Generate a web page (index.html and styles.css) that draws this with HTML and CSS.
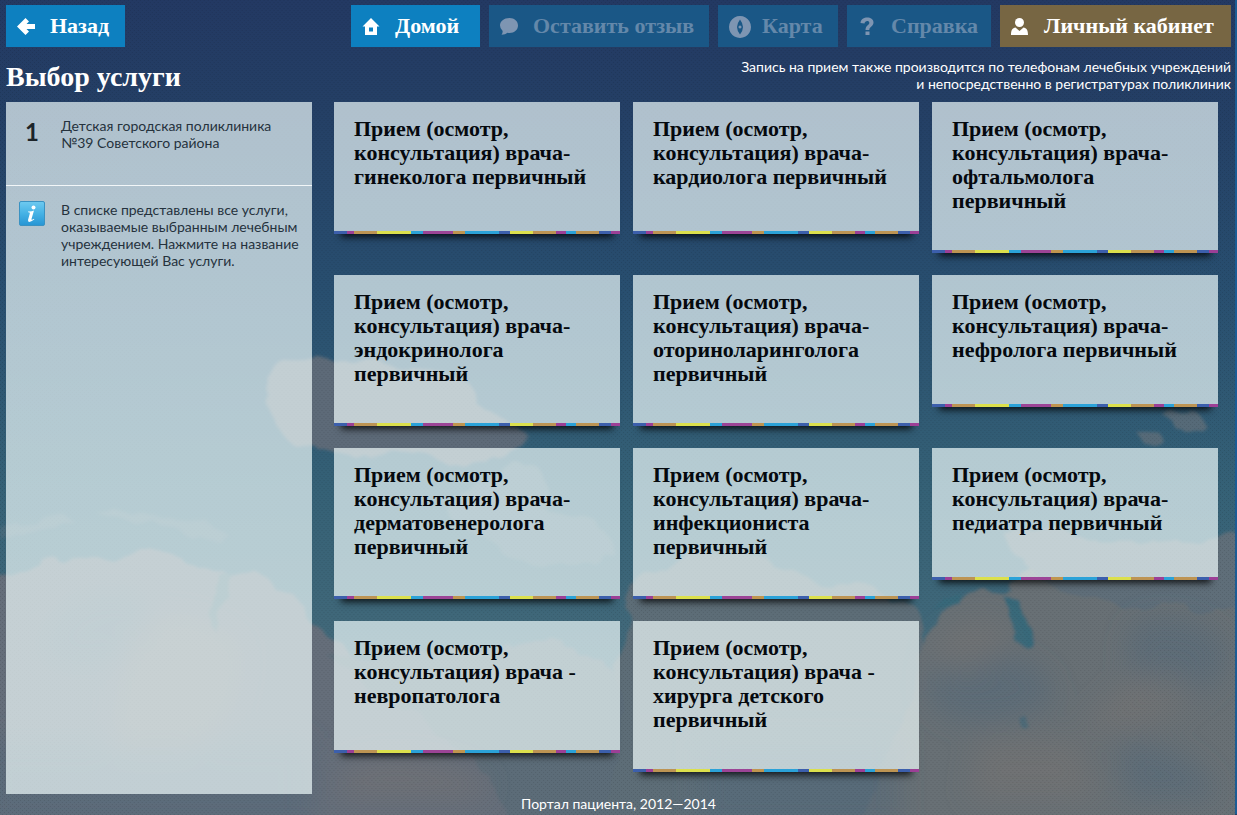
FILE: index.html
```
<!DOCTYPE html>
<html lang="ru">
<head>
<meta charset="utf-8">
<meta name="viewport" content="width=device-width, initial-scale=1">
<title>Выбор услуги</title>
<link rel="stylesheet" href="styles.css">
</head>
<body>
<svg class="sky" viewBox="0 0 1237 815" preserveAspectRatio="none" aria-hidden="true">
  <defs>
    <linearGradient id="air" x1="0" y1="0" x2="0" y2="1">
      <stop offset="0" stop-color="#233963"/>
      <stop offset=".13" stop-color="#243f65"/>
      <stop offset=".35" stop-color="#284e6f"/>
      <stop offset=".6" stop-color="#356176"/>
      <stop offset=".8" stop-color="#42697a"/>
      <stop offset="1" stop-color="#4d6973"/>
    </linearGradient>
    <filter id="soft" x="-5%" y="-5%" width="110%" height="110%">
      <feTurbulence type="fractalNoise" baseFrequency=".025" numOctaves="3" seed="4" result="noise"/>
      <feDisplacementMap in="SourceGraphic" in2="noise" scale="26" xChannelSelector="R" yChannelSelector="G"/>
      <feGaussianBlur stdDeviation="1.500"/>
    </filter>
    <filter id="haze" x="-20%" y="-20%" width="140%" height="140%"><feGaussianBlur stdDeviation="14"/></filter>
    <pattern id="weave" width="4" height="4" patternUnits="userSpaceOnUse">
      <path d="M0 0h1v1h-1zM2 2h1v1h-1z" fill="#000" opacity=".1"/>
    </pattern>
  </defs>
  <rect width="1237" height="815" fill="url(#air)"/>
  <g filter="url(#soft)">
    <path fill="#5d6a78" d="M268 375Q275 358 300 354Q322 352 335 366Q370 355 400 368Q430 372 445 372Q475 380 475 400Q515 412 522 435Q525 448 512 458Q490 455 460 460Q400 450 330 455Q285 445 268 410Z"/>
    <path fill="#4b6b7b" d="M500 470Q540 462 550 490Q550 515 590 520Q615 530 610 560Q560 570 520 560Q470 540 450 500Z"/>
    <path fill="#47697a" d="M0 528Q60 515 75 525L0 540ZM100 512Q130 505 160 516Q210 515 225 535Q220 550 200 540Q180 526 145 522Z"/>
    <path fill="#656e7a" d="M-20 573Q30 572 42 560Q70 553 98 563Q125 562 145 547Q168 543 180 554Q190 572 220 574Q238 580 255 575Q270 573 272 592Q300 594 308 612Q330 630 350 650Q380 690 450 720Q490 745 510 760Q530 785 610 790V840H-20Z"/>
    <path fill="#5c6c78" d="M330 660Q430 655 490 650Q550 625 580 650Q625 670 640 690L650 840H520Q480 740 420 720Z"/>
    <path fill="#5d6d77" d="M625 600Q650 560 690 560Q740 540 775 560Q800 590 850 585Q910 590 925 620L930 840H610Z"/>
    <path fill="#687075" d="M922 660Q930 615 965 600Q980 585 1000 592Q1010 595 1020 590Q1030 565 1065 565Q1080 550 1110 562Q1150 570 1180 565Q1215 575 1260 580V840H850Q900 745 922 660Z"/>
    <path fill="#5e6e79" d="M1010 530Q1060 525 1085 545Q1140 550 1200 540Q1215 530 1260 533V605H1110Q1040 580 1010 550Z"/>
    <path fill="#566b78" d="M1160 411Q1190 406 1210 428Q1180 436 1160 411ZM1135 430Q1160 425 1166 442Q1150 452 1135 430Z"/>
    <path fill="#37697a" d="M1006 595L1022 600L1025 625Q1042 640 1030 645Q1010 650 1014 630ZM935 610Q950 592 965 594L960 606Z"/>
    <path fill="#4c6a77" d="M222 578L235 575L225 600L218 630L208 625ZM1015 720Q1030 710 1028 728Q1018 735 1015 720Z"/>
  </g>
  <g filter="url(#haze)">
    <path fill="#52687a" opacity=".5" d="M60 610Q120 570 150 610Q170 640 120 660Q70 680 40 650ZM930 670Q1000 640 1040 670Q1080 700 1010 720Q950 730 930 700ZM1140 620Q1210 610 1230 650Q1220 710 1160 690Q1110 665 1140 620ZM1120 740Q1210 750 1220 800H1130ZM-20 740H310V830H-20ZM700 740H900V830H700Z"/>
    <path fill="#7b7673" opacity=".4" d="M930 650Q970 605 1010 630Q1010 660 960 680ZM1120 690Q1170 650 1200 690Q1160 740 1080 730ZM980 740H1080L1100 800H970ZM130 640Q160 590 240 640Q250 720 190 750H110ZM340 770Q400 740 490 780L480 800H340Z"/>
  </g>
  <rect width="1237" height="815" fill="url(#weave)"/>
</svg>

<header class="topbar">
  <button class="btn btn-back" type="button">
    <svg class="icon" viewBox="0 0 24 24" aria-hidden="true"><path d="M0 12.500L8.500 4L12 7.500L9.500 10H18v5H9.500L12 17.500L8.500 21z"/></svg>
    <span>Назад</span>
  </button>
  <nav class="menu">
    <button class="btn btn-home" type="button">
      <svg class="icon" viewBox="0 0 24 24" aria-hidden="true"><path fill-rule="evenodd" d="M9 4l8.500 8.500h-2.500V21H3v-8.500H.5zM7 13.500v4h4v-4z"/></svg>
      <span>Домой</span>
    </button>
    <button class="btn btn-review" type="button" disabled>
      <svg class="icon" viewBox="0 0 24 24" aria-hidden="true"><path d="M9.500 4c5 0 8.500 3.200 8.500 7.500s-3.500 7.500-8.500 7.500q-1 0-2-.2-2 2-6 2 1.500-2 1-4Q0 14.500 0 11.500c0-4.300 4-7.500 9.500-7.500z"/></svg>
      <span>Оставить отзыв</span>
    </button>
    <button class="btn btn-map" type="button" disabled>
      <svg class="icon" viewBox="0 0 24 24" aria-hidden="true"><path fill-rule="evenodd" d="M11 2a11 11 0 1 0 .01 0zM11 5.500q3 4 3 7.500t-3 7.500q-3-4-3-7.500t3-7.500zM11 11.500a1.500 1.500 0 1 0 .01 0z"/></svg>
      <span>Карта</span>
    </button>
    <button class="btn btn-help" type="button" disabled>
      <svg class="icon" viewBox="0 0 24 24" aria-hidden="true"><path d="M2.500 9C3 1.800 15.500 2 15.500 8.500c0 4-4.200 4-4.200 7.500H7.500c0-5 3.800-4.500 3.800-7.300 0-2.500-4.600-2.400-4.800.8zM7.500 17.500h4v3.500h-4z"/></svg>
      <span>Справка</span>
    </button>
    <button class="btn btn-account" type="button">
      <svg class="icon" viewBox="0 0 24 24" aria-hidden="true"><circle cx="8.500" cy="8.500" r="4.500"/><path d="M0 21c0-5 1.500-7 4.500-7.500l4 3.500 4-3.500c3 .5 4.500 2.500 4.500 7.500z"/></svg>
      <span>Личный кабинет</span>
    </button>
  </nav>
</header>

<div class="heading">
  <h1>Выбор услуги</h1>
  <p>Запись на прием также производится по телефонам лечебных учреждений<br>и непосредственно в регистратурах поликлиник</p>
</div>

<div class="content">
  <aside class="sidebar">
    <section class="step">
      <span class="step-number">1</span>
      <p>Детская городская поликлиника №39 Советского района</p>
    </section>
    <section class="hint">
      <svg class="info" viewBox="0 0 26 26" aria-hidden="true">
        <defs><linearGradient id="info-fill" x1="0" y1="0" x2="0" y2="1"><stop offset="0" stop-color="#6fcaf0"/><stop offset=".5" stop-color="#45b2e5"/><stop offset="1" stop-color="#2795d4"/></linearGradient></defs>
        <rect x=".5" y=".5" width="25" height="24" rx="1.500" fill="url(#info-fill)" stroke="#3a92c2"/>
        <circle cx="14.500" cy="6.500" r="2" fill="#fff"/>
        <path fill="#fff" d="M9 10.500q3.500.2 6-1l-2.500 8.500q-.4 1.600 2.500-.2l.3.800q-6.500 4.500-6.300.4l1.800-6.500q.4-1.500-1.800-1.200z"/>
      </svg>
      <p>В списке представлены все услуги, оказываемые выбранным лечебным учреждением. Нажмите на название интересующей Вас услуги.</p>
    </section>
  </aside>
  <main class="tiles">
    <a class="tile" href="#">Прием (осмотр, консультация) врача-гинеколога первичный</a>
    <a class="tile" href="#">Прием (осмотр, консультация) врача-кардиолога первичный</a>
    <a class="tile" href="#">Прием (осмотр, консультация) врача-офтальмолога первичный</a>
    <a class="tile" href="#">Прием (осмотр, консультация) врача-эндокринолога первичный</a>
    <a class="tile" href="#">Прием (осмотр, консультация) врача-оториноларинголога первичный</a>
    <a class="tile" href="#">Прием (осмотр, консультация) врача-нефролога первичный</a>
    <a class="tile" href="#">Прием (осмотр, консультация) врача-дерматовенеролога первичный</a>
    <a class="tile" href="#">Прием (осмотр, консультация) врача-инфекциониста первичный</a>
    <a class="tile" href="#">Прием (осмотр, консультация) врача-педиатра первичный</a>
    <a class="tile" href="#">Прием (осмотр, консультация) врача - невропатолога</a>
    <a class="tile" href="#">Прием (осмотр, консультация) врача - хирурга детского первичный</a>
  </main>
</div>

<footer class="footer">Портал пациента, 2012—2014</footer>
</body>
</html>
```
FILE: styles.css
```
* {
  box-sizing: border-box;
}

body {
  margin: 0;
  padding: 5px 4px 0 6px;
  border-right: 2px solid #1c5c94;
  background: #243f65;
  color: #fff;
  font: 14px/17px Lato, "Noto Sans", sans-serif;
}

h1,
p {
  margin: 0;
}

.sky {
  position: absolute;
  inset: 0 2px 0 0;
  z-index: -1;
  width: calc(100% - 2px);
  height: 100%;
}

.topbar,
.menu,
.heading,
.content {
  display: flex;
}

.topbar,
.heading {
  justify-content: space-between;
}

.menu {
  gap: 9px;
}

.btn {
  display: flex;
  align-items: center;
  gap: 9px;
  height: 42px;
  padding: 0 0 0 11px;
  border: 0;
  background: #0d80c0;
  color: #fff;
  font: bold 22px/24px "Liberation Serif", serif;
  white-space: nowrap;
}

.btn:disabled {
  background: #1a5786;
  color: #6488aa;
}

.btn-back { width: 119px; }
.btn-home { width: 129px; }
.btn-review { width: 220px; }
.btn-map { width: 120px; }
.btn-help { width: 144px; }

.btn-account {
  width: 231px;
  background: #776643;
}

.icon {
  flex: none;
  width: 24px;
  height: 24px;
  fill: currentColor;
}

.btn:disabled .icon {
  fill: #7e95b2;
}

.heading {
  padding: 11px 0 6px;
}

h1 {
  font: bold 28px/38px "Liberation Serif", serif;
}

.heading p {
  text-align: right;
}

.content {
  gap: 22px;
}

.sidebar {
  flex: none;
  width: 306px;
  background: rgba(243, 255, 255, .68);
  color: #25323d;
}

.step,
.hint {
  display: grid;
  grid-template-columns: 26px 1fr;
  align-items: start;
  gap: 16px;
  padding: 15px 10px 34px 13px;
}

.step {
  border-bottom: 1px solid #f2f6f8;
}

.step-number {
  color: #1c2429;
  font: bold 24px/29px Lato, "Noto Sans", sans-serif;
  text-align: center;
}

.info {
  width: 26px;
  height: 26px;
}

.tiles {
  flex: 1;
  display: grid;
  grid-template-columns: repeat(3, 1fr);
  align-items: start;
  align-content: start;
  gap: 22px 13px;
  padding: 0 13px 22px 0;
}

.tile {
  min-height: 132px;
  padding: 15px 20px 40px;
  background:
    linear-gradient(to right,
      #3c5fac 0 13px, #9c3f96 13px 20px, #bd9453 20px 43px, #dce04c 43px 77px,
      #2ba2d8 77px 89px, #9c4496 89px 119px, #c0954f 119px 131px, #2ba2d8 131px 165px,
      #3c5fac 165px 176px, #dce04c 176px 199px, #bd9453 199px 222px, #9c3f96 222px 232px,
      #2ba2d8 232px 242px, #bd9453 242px 265px, #3c5fac 265px 277px, #9c3f96 277px)
      left bottom / 100% 3px no-repeat,
    rgba(243, 255, 255, .68);
  box-shadow: 0 10px 7px -7px rgba(0, 0, 0, .8);
  color: #05090e;
  font: bold 22px/24px "Liberation Serif", serif;
  text-decoration: none;
}

.footer {
  line-height: 20px;
  text-align: center;
}
```
